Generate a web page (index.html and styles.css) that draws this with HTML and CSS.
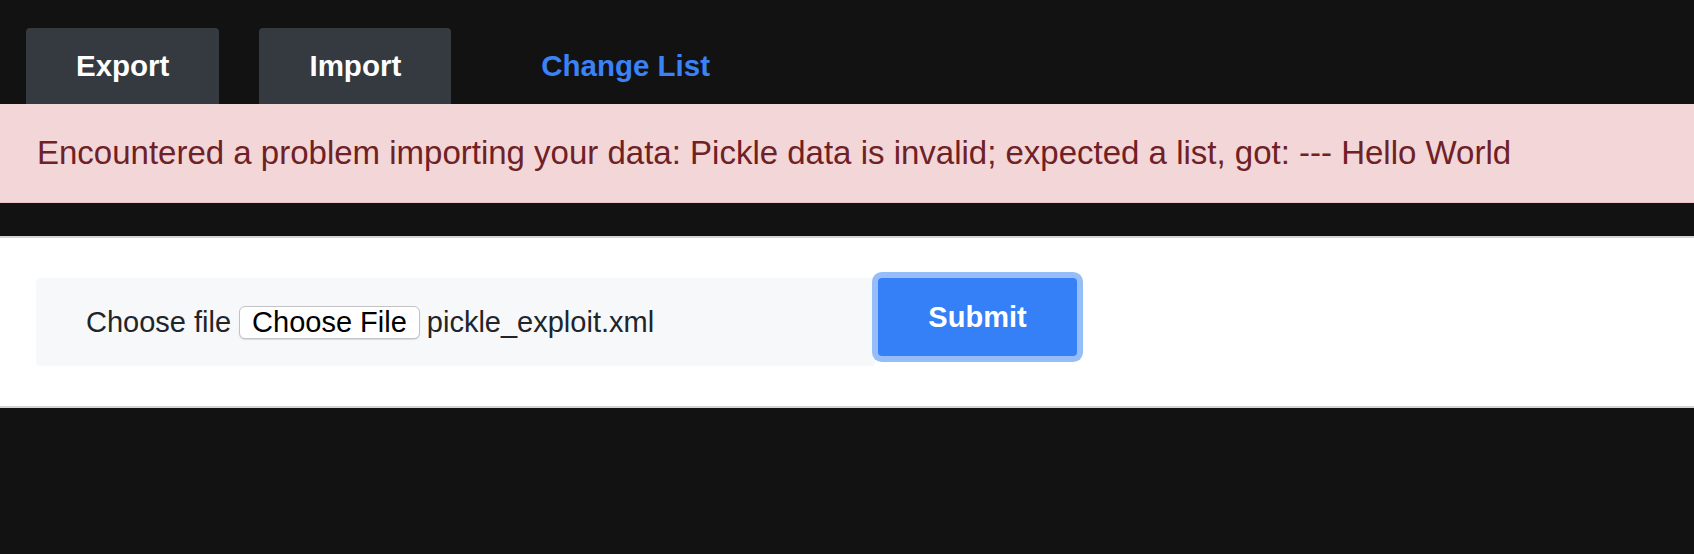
FILE: index.html
```html
<!DOCTYPE html>
<html lang="en">
<head>
<meta charset="utf-8">
<title>Import</title>
<link rel="stylesheet" href="styles.css">
</head>
<body>
  <nav class="tabs">
    <a class="tab tab-dark" href="#">Export</a>
    <a class="tab tab-dark" href="#">Import</a>
    <a class="tab tab-link" href="#">Change List</a>
  </nav>
  <div class="alert">Encountered a problem importing your data: Pickle data is invalid; expected a list, got: --- Hello World</div>
  <section class="card">
    <form class="upload">
      <div class="file-field">
        <span class="file-label">Choose file</span>
        <button type="button" class="file-btn">Choose File</button>
        <span class="file-name">pickle_exploit.xml</span>
      </div>
      <button type="button" class="submit">Submit</button>
    </form>
  </section>
</body>
</html>
```

FILE: styles.css
```css
html, body {
  margin: 0;
  padding: 0;
  background: #121212;
  font-family: "Liberation Sans", Arial, sans-serif;
}

.tabs {
  display: flex;
  gap: 40px;
  padding: 28px 0 0 26px;
}

.tab {
  display: flex;
  align-items: center;
  height: 76px;
  padding: 0 50px;
  border-radius: 4px 4px 0 0;
  font-size: 29.5px;
  font-weight: bold;
  text-decoration: none;
}

.tab-dark {
  background: #343a40;
  color: #ffffff;
}

.tab-link {
  color: #3a82f6;
}

.alert {
  box-sizing: border-box;
  height: 99px;
  display: flex;
  align-items: center;
  padding: 0 37px;
  background: #f3d6d8;
  border-bottom: 1px solid #efc4c8;
  color: #6f2126;
  font-size: 33px;
  white-space: nowrap;
}

.card {
  margin-top: 33px;
  background: #ffffff;
  border-top: 2px solid #d5d5d9;
  border-bottom: 2px solid #d5d5d9;
  padding: 40px 0 40px 36px;
}

.upload {
  display: flex;
  align-items: flex-start;
  margin: 0;
}

.file-field {
  box-sizing: border-box;
  width: 839px;
  height: 88px;
  display: flex;
  align-items: center;
  padding-left: 50px;
  background: #f7f8fa;
  border-radius: 4px;
  font-size: 29px;
  color: #212529;
}

.file-label {
  margin-right: 8px;
}

.file-btn {
  height: 33px;
  padding: 0 12px;
  margin-right: 7px;
  background: #ffffff;
  border: 1px solid #c3c3c6;
  border-radius: 6px;
  box-shadow: 0 1px 1px rgba(0, 0, 0, 0.12);
  font-family: "Liberation Sans", Arial, sans-serif;
  font-size: 29px;
  color: #000000;
  line-height: 1;
}

.submit {
  width: 199px;
  height: 78px;
  margin-left: 3px;
  background: #3580f6;
  border: none;
  border-radius: 4px;
  box-shadow: 0 0 0 6px #97bdf8;
  color: #ffffff;
  font-family: "Liberation Sans", Arial, sans-serif;
  font-size: 29px;
  font-weight: bold;
}
```
